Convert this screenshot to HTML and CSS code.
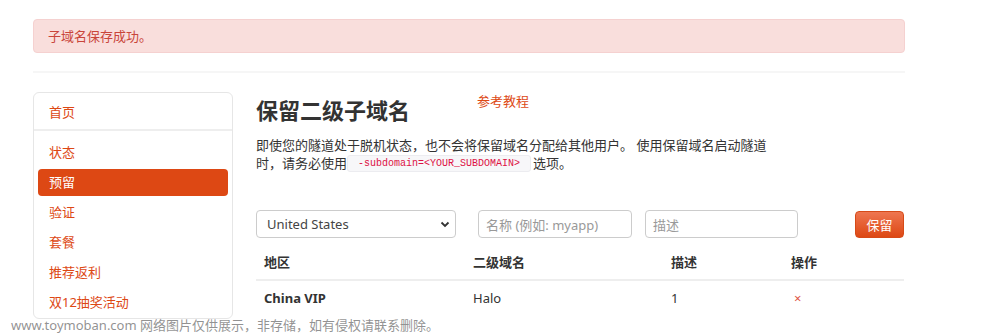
FILE: index.html
```html
<!DOCTYPE html>
<html lang="zh-CN">
<head>
<meta charset="utf-8">
<title>保留二级子域名</title>
<link rel="stylesheet" href="styles.css">
</head>
<body>
<div class="page">
  <div class="alert">子域名保存成功。</div>
  <hr class="rule">
  <div class="layout">
    <nav class="sidebar">
      <a class="home" href="#">首页</a>
      <ul class="nav">
        <li><a href="#">状态</a></li>
        <li><a class="active" href="#">预留</a></li>
        <li><a href="#">验证</a></li>
        <li><a href="#">套餐</a></li>
        <li><a href="#">推荐返利</a></li>
        <li><a href="#">双12抽奖活动</a></li>
      </ul>
    </nav>
    <main class="main">
      <div class="title-row">
        <h2 class="title">保留二级子域名</h2>
        <a class="tutorial" href="#">参考教程</a>
      </div>
      <p class="desc">即使您的隧道处于脱机状态，也不会将保留域名分配给其他用户。 使用保留域名启动隧道时，请务必使用<code class="code">-subdomain=&lt;YOUR_SUBDOMAIN&gt;</code>选项。</p>
      <form class="form-row">
        <div class="select">
          <span>United States</span>
          <svg class="chev" width="10" height="7" viewBox="0 0 10 7"><path d="M1.5 1.5 L5 5 L8.5 1.5" fill="none" stroke="#333" stroke-width="1.8"/></svg>
        </div>
        <div class="input name">名称 (例如: myapp)</div>
        <div class="input descr">描述</div>
        <button class="btn" type="button">保留</button>
      </form>
      <table class="table">
        <thead>
          <tr><th class="c1">地区</th><th class="c2">二级域名</th><th class="c3">描述</th><th class="c4">操作</th></tr>
        </thead>
        <tbody>
          <tr><td class="region">China VIP</td><td>Halo</td><td>1</td><td class="del">×</td></tr>
        </tbody>
      </table>
    </main>
  </div>
</div>
<div class="watermark">www.toymoban.com 网络图片仅供展示，非存储，如有侵权请联系删除。</div>
</body>
</html>
```
FILE: styles.css
```css
* { box-sizing: border-box; }
html, body { margin: 0; padding: 0; background: #fff; }
body {
  font-family: "Noto Sans", "Noto Sans CJK SC", sans-serif;
  font-size: 13px;
  color: #333;
  position: relative;
  height: 333px;
  overflow: hidden;
}
.page {
  width: 872px;
  margin-left: 33px;
  padding-top: 19px;
}
.alert {
  height: 34px;
  line-height: 32px;
  padding-left: 14px;
  background: #f9dedc;
  border: 1px solid #f5d1d0;
  border-radius: 4px;
  color: #c9453a;
  font-size: 13px;
}
.rule {
  margin: 18px 0 19px;
  border: 0;
  border-top: 2px solid #f6f6f6;
}
.layout {
  display: flex;
  gap: 23px;
}
.sidebar {
  width: 200px;
  flex: none;
  border: 1px solid #e6e6e6;
  border-radius: 6px;
  height: 227px;
}
.sidebar a { color: #dd4814; text-decoration: none; }
.home {
  display: block;
  height: 38px;
  line-height: 38px;
  padding-left: 15px;
  border-bottom: 2px solid #eeeeee;
}
.nav {
  list-style: none;
  margin: 0;
  padding: 8px 4px 0;
}
.nav li a {
  display: block;
  height: 27px;
  line-height: 27px;
  padding-left: 11px;
  margin-bottom: 3px;
  border-radius: 4px;
}
.nav li a.active {
  background: #dd4814;
  color: #fff;
}
.main { flex: 1; }
.title-row {
  display: flex;
  align-items: flex-start;
}
.title {
  margin: 4px 0 0;
  font-size: 22px;
  line-height: 28px;
  font-weight: 700;
  color: #333;
}
.tutorial {
  margin-left: 67px;
  color: #dd4814;
  text-decoration: none;
  font-size: 13px;
  line-height: 18px;
}
.desc {
  margin: 12px 0 0;
  width: 525px;
  line-height: 18px;
  font-size: 13px;
  color: #333;
}
.code {
  display: inline-block;
  vertical-align: top;
  margin-top: 1px;
  height: 17px;
  line-height: 15px;
  font-family: "Liberation Mono", monospace;
  font-size: 10px;
  color: #dd1144;
  background: #f7f7f9;
  border: 1px solid #ececf0;
  border-radius: 3px;
  padding: 0 10px;
  margin-right: 2px;
}
.form-row {
  display: flex;
  align-items: center;
  margin-top: 38px;
  height: 28px;
}
.select, .input {
  height: 28px;
  border: 1px solid #cccccc;
  border-radius: 4px;
  background: #fff;
  display: flex;
  align-items: center;
}
.select {
  width: 200px;
  padding: 0 5px 0 10px;
  justify-content: space-between;
  color: #444;
  font-size: 13px;
}
.chev { display: block; }
.input {
  padding-left: 7px;
  color: #999;
  font-size: 13px;
}
.name { width: 154px; margin-left: 22px; }
.descr { width: 153px; margin-left: 13px; }
.btn {
  margin-left: 57px;
  width: 49px;
  height: 27px;
  border: 1px solid #d64a18;
  border-radius: 4px;
  background: linear-gradient(#ee7650, #dd4814);
  color: #fff;
  font-family: inherit;
  font-size: 13px;
  padding: 0;
}
.table {
  width: 648px;
  border-collapse: collapse;
  margin-top: 7px;
}
.table th, .table td {
  text-align: left;
  padding: 8px 8px;
  line-height: 18px;
  font-size: 13px;
}
.table th {
  font-weight: 700;
  border-bottom: 2px solid #eeeeee;
}
.c1 { width: 209px; }
.c2 { width: 198px; }
.c3 { width: 120px; }
.region { font-weight: 700; }
.del { color: #e05545; font-size: 11px; padding-left: 11px !important; }
.watermark {
  position: absolute;
  left: 11px;
  top: 316px;
  font-size: 13px;
  line-height: 18px;
  color: rgba(110, 110, 110, 0.75);
  white-space: nowrap;
}
```
